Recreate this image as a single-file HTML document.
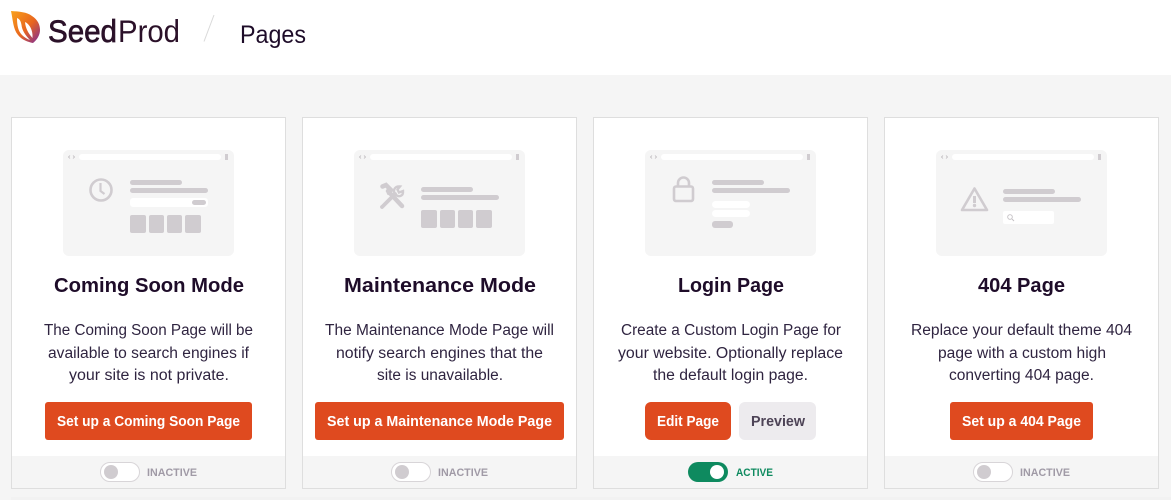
<!DOCTYPE html>
<html><head><meta charset="utf-8"><title>Pages</title>
<style>
html,body{margin:0;padding:0;background:#f5f5f5;width:1171px;height:500px;overflow:hidden}
svg{display:block}
text{font-family:"Liberation Sans",sans-serif}
.t{font-size:20.500px;font-weight:bold;fill:#1e0c29}
.b{font-size:15.500px;fill:#2f2440}
.w{font-size:14.500px;font-weight:bold;fill:#fff}
.s{font-size:11px;font-weight:bold;fill:#a09aa6}
.m{fill:#f5f5f5}.g{fill:#d0ccd0}.f{fill:#fff}
.ic{fill:none;stroke:#d0ccd0;stroke-width:2.600}
</style></head><body>
<svg width="1171" height="500" viewBox="0 0 1171 500" xmlns="http://www.w3.org/2000/svg">
<defs>
<linearGradient id="lg" x1="0" y1="0" x2="1" y2="1"><stop offset="0" stop-color="#f9a11b"/><stop offset=".55" stop-color="#e8651f"/><stop offset="1" stop-color="#7b2a9c"/></linearGradient>
<g id="chrome">
<rect width="171" height="106" rx="6" class="m"/>
<rect x="16" y="4" width="142" height="6" rx="3" class="f"/>
<rect x="162" y="4" width="3" height="6" class="g"/>
<path d="M7 5.500 5.500 7 7 8.500M10 5.500 11.500 7 10 8.500" fill="none" stroke="#bdb9bd" stroke-width=".8"/>
</g>
</defs>
<rect width="1171" height="500" fill="#f5f5f5"/>
<rect width="1171" height="75" fill="#fff"/>
<rect x="11" y="497" width="1160" height="3" fill="#f2f2f2"/>

<!-- logo -->
<path d="M11 11C19 11.500 27 12 32 16 38 20 40 25 40 30 40 35 37 40 33 43 28 42 22 40 18 35 13 29 13 20 11 11Z" fill="url(#lg)"/>
<path d="M17 18C17 25 18 31 22 35 24 37 27 39 30 40 25 35 22 30 21.500 25 21 22 20 19 17 18Z" fill="#fff"/>
<path d="M25 22C29.500 24 33 30 32.500 38 28 33 25.500 28 25 22Z" fill="#fff"/>

<text x="48" y="42" font-size="31.500" fill="#2b1129" stroke="#2b1129" stroke-width=".7" textLength="69" lengthAdjust="spacingAndGlyphs">Seed</text>
<text x="118" y="42" font-size="31.500" fill="#2b1129" textLength="62" lengthAdjust="spacingAndGlyphs">Prod</text>
<path d="M204 41.500 214 15" stroke="#d9d9d9" stroke-width="1" fill="none"/>
<text x="240" y="43" font-size="25" fill="#1e0c29" textLength="66" lengthAdjust="spacingAndGlyphs">Pages</text>

<!-- cards -->
<g fill="#fff" stroke="#dedede"><rect x="11.500" y="117.500" width="274" height="371"/><rect x="302.500" y="117.500" width="274" height="371"/><rect x="593.500" y="117.500" width="274" height="371"/><rect x="884.500" y="117.500" width="274" height="371"/></g>
<g fill="#f5f5f5"><rect x="12" y="456" width="273" height="32"/><rect x="303" y="456" width="273" height="32"/><rect x="594" y="456" width="273" height="32"/><rect x="885" y="456" width="273" height="32"/></g>

<!-- mock 1 -->
<use href="#chrome" x="63" y="150"/>
<circle cx="101" cy="190" r="10.500" class="ic"/>
<path d="M100.500 183v8l4 3" class="ic" style="stroke-width:2.200"/>
<rect x="130" y="180" width="52" height="5" rx="2.500" class="g"/>
<rect x="130" y="188" width="78" height="5" rx="2.500" class="g"/>
<rect x="130" y="198" width="78" height="9" rx="3" class="f"/>
<rect x="192" y="200" width="14" height="5" rx="2.500" class="g"/>
<rect x="130" y="215" width="16" height="18" rx="2" class="g"/><rect x="149" y="215" width="15" height="18" rx="2" class="g"/><rect x="167" y="215" width="15" height="18" rx="2" class="g"/><rect x="185" y="215" width="16" height="18" rx="2" class="g"/>

<!-- mock 2 -->
<use href="#chrome" x="354" y="150"/>
<path d="M382.500 186.500 386 185 391 190 389 193 M388 191 402 206" stroke="#d0ccd0" stroke-width="4.500" stroke-linecap="round" fill="none"/>
<path d="M382 207 395 194" stroke="#d0ccd0" stroke-width="3.800" stroke-linecap="round"/>
<path d="M395 194C392.500 190 395 186 400 186.500L397.500 189.500 399 192.500 403 191C403.500 196 399 198 395 194Z" class="ic" style="stroke-width:2.400"/>
<rect x="421" y="187" width="52" height="5" rx="2.500" class="g"/>
<rect x="421" y="195" width="78" height="5" rx="2.500" class="g"/>
<rect x="421" y="210" width="16" height="18" rx="2" class="g"/><rect x="440" y="210" width="15" height="18" rx="2" class="g"/><rect x="458" y="210" width="15" height="18" rx="2" class="g"/><rect x="476" y="210" width="16" height="18" rx="2" class="g"/>

<!-- mock 3 -->
<use href="#chrome" x="645" y="150"/>
<rect x="674" y="186.500" width="19" height="14.500" rx="2" class="ic"/>
<path d="M678 186.500v-3.500a5.500 5.500 0 0 1 11 0v3.500" class="ic"/>
<rect x="712" y="180" width="52" height="5" rx="2.500" class="g"/>
<rect x="712" y="188" width="78" height="5" rx="2.500" class="g"/>
<rect x="712" y="201" width="38" height="7" rx="3.500" class="f"/>
<rect x="712" y="210" width="38" height="7" rx="3.500" class="f"/>
<rect x="712" y="221" width="21" height="7" rx="3" class="g"/>

<!-- mock 4 -->
<use href="#chrome" x="936" y="150"/>
<path d="M974.500 188.500 987 210H962Z" class="ic" stroke-linejoin="round"/>
<path d="M974.500 196v7" stroke="#d0ccd0" stroke-width="3"/>
<circle cx="974.500" cy="205.500" r="1.700" class="g"/>
<rect x="1003" y="189" width="52" height="5" rx="2.500" class="g"/>
<rect x="1003" y="197" width="78" height="5" rx="2.500" class="g"/>
<rect x="1003" y="211" width="51" height="13" rx="2" class="f"/>
<circle cx="1010" cy="217" r="2.300" fill="none" stroke="#c4c0c4" stroke-width=".9"/>
<path d="M1012 219 1014 221" stroke="#c4c0c4" stroke-width="1"/>

<!-- titles -->
<text class="t" x="54" y="292" textLength="190" lengthAdjust="spacingAndGlyphs">Coming Soon Mode</text>
<text class="t" x="344" y="292" textLength="192" lengthAdjust="spacingAndGlyphs">Maintenance Mode</text>
<text class="t" x="678" y="292" textLength="106" lengthAdjust="spacingAndGlyphs">Login Page</text>
<text class="t" x="978" y="292" textLength="87" lengthAdjust="spacingAndGlyphs">404 Page</text>

<!-- body -->
<text class="b" x="44" y="335" textLength="209" lengthAdjust="spacingAndGlyphs">The Coming Soon Page will be</text>
<text class="b" x="48" y="358" textLength="201" lengthAdjust="spacingAndGlyphs">available to search engines if</text>
<text class="b" x="69" y="380" textLength="160" lengthAdjust="spacingAndGlyphs">your site is not private.</text>
<text class="b" x="325" y="335" textLength="229" lengthAdjust="spacingAndGlyphs">The Maintenance Mode Page will</text>
<text class="b" x="336" y="358" textLength="207" lengthAdjust="spacingAndGlyphs">notify search engines that the</text>
<text class="b" x="377" y="380" textLength="126" lengthAdjust="spacingAndGlyphs">site is unavailable.</text>
<text class="b" x="621" y="335" textLength="220" lengthAdjust="spacingAndGlyphs">Create a Custom Login Page for</text>
<text class="b" x="618" y="358" textLength="225" lengthAdjust="spacingAndGlyphs">your website. Optionally replace</text>
<text class="b" x="653" y="380" textLength="155" lengthAdjust="spacingAndGlyphs">the default login page.</text>
<text class="b" x="911" y="335" textLength="221" lengthAdjust="spacingAndGlyphs">Replace your default theme 404</text>
<text class="b" x="938" y="358" textLength="168" lengthAdjust="spacingAndGlyphs">page with a custom high</text>
<text class="b" x="949" y="380" textLength="145" lengthAdjust="spacingAndGlyphs">converting 404 page.</text>

<!-- buttons -->
<g fill="#df4a1f"><rect x="45" y="402" width="207" height="38" rx="3"/><rect x="315" y="402" width="249" height="38" rx="3"/><rect x="645" y="402" width="86" height="38" rx="6"/><rect x="950" y="402" width="143" height="38" rx="3"/></g>
<rect x="739" y="402" width="77" height="38" rx="6" fill="#edebee"/>
<text class="w" x="57" y="426" textLength="183" lengthAdjust="spacingAndGlyphs">Set up a Coming Soon Page</text>
<text class="w" x="327" y="426" textLength="225" lengthAdjust="spacingAndGlyphs">Set up a Maintenance Mode Page</text>
<text class="w" x="657" y="426" textLength="62" lengthAdjust="spacingAndGlyphs">Edit Page</text>
<text class="w" x="751" y="426" textLength="54" lengthAdjust="spacingAndGlyphs" style="fill:#4d4356">Preview</text>
<text class="w" x="962" y="426" textLength="119" lengthAdjust="spacingAndGlyphs">Set up a 404 Page</text>

<!-- toggles -->
<g fill="#fff" stroke="#d8d5d8"><rect x="100.500" y="462.500" width="39" height="19" rx="9.500"/><rect x="391.500" y="462.500" width="39" height="19" rx="9.500"/><rect x="973.500" y="462.500" width="39" height="19" rx="9.500"/></g>
<g fill="#d0ccd0"><circle cx="111" cy="472" r="7"/><circle cx="402" cy="472" r="7"/><circle cx="984" cy="472" r="7"/></g>
<rect x="688" y="462" width="40" height="20" rx="10" fill="#0e8a5f"/>
<circle cx="717" cy="472" r="7" fill="#fff"/>
<text class="s" x="147" y="476" textLength="50" lengthAdjust="spacingAndGlyphs">INACTIVE</text>
<text class="s" x="438" y="476" textLength="50" lengthAdjust="spacingAndGlyphs">INACTIVE</text>
<text class="s" x="736" y="476" textLength="37" lengthAdjust="spacingAndGlyphs" style="fill:#0e8a5f">ACTIVE</text>
<text class="s" x="1020" y="476" textLength="50" lengthAdjust="spacingAndGlyphs">INACTIVE</text>
</svg>
</body></html>
